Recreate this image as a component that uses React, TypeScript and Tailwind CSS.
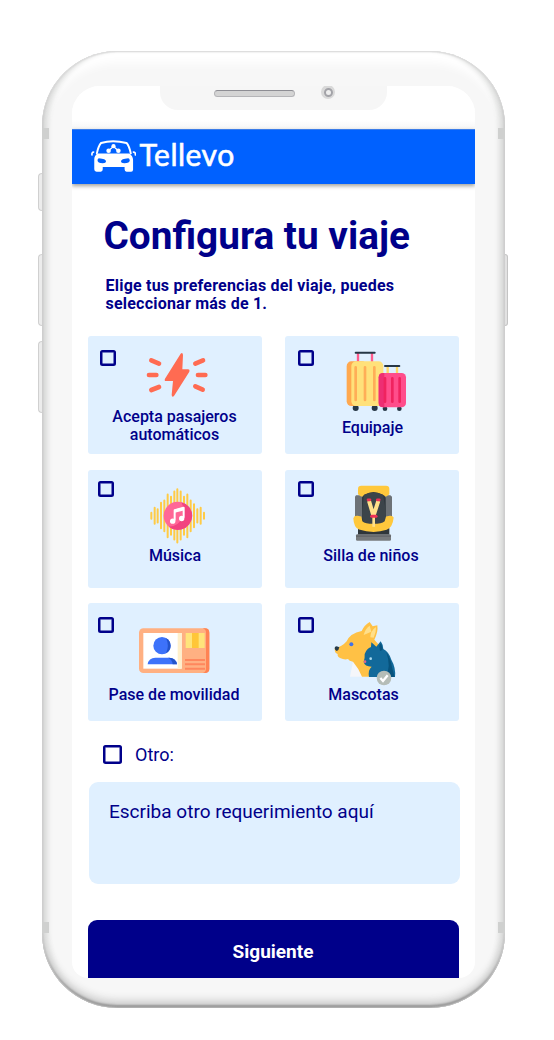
import type { ReactNode } from 'react';

function Box({ className = '' }: { className?: string }) {
  return (
    <input
      type="checkbox"
      className={`block shrink-0 appearance-none rounded-[2.5px] border-2 border-[#00008a] shadow-[inset_0_0_0_0.5px_#00008a] checked:bg-[#00008a] ${className}`}
    />
  );
}

type CardProps = { box: string; label: string; labelClass?: string; children: ReactNode };

function Card({ box, label, labelClass = '', children }: CardProps) {
  return (
    <label className="grid h-[118px] justify-items-center rounded-[3px] bg-[#e0f0ff]">
      <Box className={`col-start-1 row-start-1 h-4 w-4 justify-self-start ${box}`} />
      <div className="col-start-1 row-start-1 flex flex-col items-center">
        {children}
        <span className={`w-[150px] text-center text-[16px] font-medium leading-[18px] ${labelClass}`}>{label}</span>
      </div>
    </label>
  );
}

function Bolt() {
  return (
    <svg className="ml-[2px] h-[72px] w-24" viewBox="139 18 288 216">
      <path d="M297 71 250 146q-3 7 3 7h21l-4 42q1 8 7 3l46-73q2-7-4-7h-17l2-43q-1-9-7-4Z" fill="#ff6b52" />
      <path d="M209 91l23 10M202 135h22M209 180l23-9M364 91l-23 10M349 135h22M341 169l22 10" stroke="#ff6b52" strokeWidth="14" strokeLinecap="round" />
    </svg>
  );
}

function Luggage() {
  return (
    <svg className="ml-[2px] h-[83px] w-24" viewBox="145 18 288 249">
      <path d="M244 68v28M286 68v28" stroke="#ff5c8d" strokeWidth="7" />
      <path d="M237 68h57" stroke="#263746" strokeWidth="6" strokeLinecap="round" />
      <path d="M333 108v24M361 108v24" stroke="#ffd866" strokeWidth="7" />
      <path d="M325 108h43" stroke="#263746" strokeWidth="6" strokeLinecap="round" />
      <circle cx="237" cy="234" r="9" fill="#263746" /><circle cx="294" cy="234" r="9" fill="#263746" />
      <circle cx="325" cy="236" r="7" fill="#263746" /><circle cx="368" cy="236" r="7" fill="#263746" />
      <rect x="210" y="94" width="60" height="134" rx="14" fill="#ffa84f" />
      <rect x="224" y="94" width="96" height="134" rx="14" fill="#ffe17a" />
      <path d="M237 112v98M265 112v98M293 112v98" stroke="#ffae57" strokeWidth="8" strokeLinecap="round" />
      <rect x="306" y="129" width="82" height="103" rx="13" fill="#ff4d8b" />
      <path d="M306 142q0-13 13-13h4v103h-4q-13 0-13-13Z" fill="#ee2e73" />
      <path d="M325 145v70M347 145v70M369 145v70" stroke="#f0235f" strokeWidth="8" strokeLinecap="round" />
    </svg>
  );
}

function Music() {
  return (
    <svg className="h-[77px] w-24" viewBox="139 15.5 288 231">
      <path d="M212 144v18M222 129v48M231 133v40M241 114v76M251 107v92M261 89v128M271 96v114M281 80v144M290 73v160M300 80v144M310 96v114M320 89v128M330 107v92M340 118v69M350 133v40M360 129v48M370 144v18" stroke="#ffcb45" strokeWidth="6" strokeLinecap="round" />
      <circle cx="291" cy="153" r="42" fill="#ff6797" />
      <path d="M302 112a42 42 0 0 1 0 82q-22 5-38-8 31-1 42-31 7-24-4-43Z" fill="#f24380" />
      <path d="M282 167v-31l27-7v30" fill="none" stroke="#fff" strokeWidth="6" strokeLinejoin="round" />
      <path d="M282 134l27-7v10l-27 7Z" fill="#fff" />
      <circle cx="276" cy="169" r="8" fill="#fff" /><circle cx="303" cy="161" r="8" fill="#fff" />
    </svg>
  );
}

function ChildSeat() {
  return (
    <svg className="h-[77px] w-24" viewBox="144 15.5 288 231">
      <path d="M240 91h20v72h-23V96ZM326 91h17l5 5v67h-22Z" fill="#6d7277" />
      <path d="M246 190h94v20h-94Z" fill="#2f363b" />
      <rect x="240" y="208" width="105" height="20" rx="4" fill="#777a7d" />
      <path d="M240 214h105" stroke="#606367" strokeWidth="4" />
      <path d="M246 88V72q0-9 10-9h74q10 0 10 9v16l-9 7h-76Z" fill="#ffc83c" />
      <path d="M258 97q4-6 9-8 25-15 52 0 8 3 10 10l1 74q-6 14-24 17h-26q-18-3-22-15Z" fill="#30383e" />
      <path d="M264 90q29-14 57 0l8 44q4 33-10 48h-50q-14-15-10-48Z" fill="#3c444a" />
      <path d="M232 160q2-8 13-7l11 2 3 14q8 8 33 8t34-8l4-14 11-2q9-1 12 5-3 30-21 37-40 13-83-1-16-7-17-34Z" fill="#ffc83c" />
      <path d="M279 108l13 44M307 108l-14 44" fill="none" stroke="#ffe08a" strokeWidth="12" />
      <path d="M293 152v34" stroke="#ffe08a" strokeWidth="8" />
      <path d="M276 105h6M304 105h6" stroke="#ef3156" strokeWidth="8" strokeLinecap="round" />
      <path d="M287 154h13" stroke="#ef3156" strokeWidth="9" strokeLinecap="round" />
    </svg>
  );
}

function PassCard() {
  return (
    <svg className="ml-[1px] h-[83px] w-24" viewBox="139 15 288 249">
      <rect x="175" y="91" width="211" height="134" rx="13" fill="#ffb082" />
      <path d="M366 91h7q13 0 13 13v108q0 13-13 13h-7q10-3 10-13V104q0-10-10-13Z" fill="#ff8354" />
      <rect x="188" y="105" width="115" height="107" fill="#fff" />
      <path d="M291 105h12v107h-12Z" fill="#fff0cb" />
      <circle cx="244" cy="143" r="26" fill="#3d72fa" />
      <path d="M256 120a26 26 0 0 1 0 46q11-23 0-46Z" fill="#2454ca" />
      <path d="M201 199q3-20 23-20h42q20 0 23 20Z" fill="#3d72fa" />
      <path d="M263 179q22-1 26 20h-13q-1-14-13-20Z" fill="#2454ca" />
      <rect x="315" y="105" width="57" height="45" fill="#ffe47b" />
      <rect x="334" y="105" width="20" height="45" fill="#ffc638" />
      <path d="M313 186h60M313 199h60M313 212h60" stroke="#ff875d" strokeWidth="6" />
    </svg>
  );
}

function Pets() {
  return (
    <svg className="h-[83px] w-24" viewBox="145 15 288 249">
      <path d="M232 191l-9 45h52l-16-43Z" fill="#f5f6fa" />
      <path d="M177 150q22-3 36-20 10-24 45-31 8-18 24-27l9 13 14-3q3 20-9 43 26 24 25 60l-5 51h-57q-9-24-27-45-12-2-15-8-11 3-22-2-11-5-9-13-10-2-9-18Z" fill="#ffc145" />
      <path d="M264 111q4-18 18-28l5 18M284 118q0-19 17-31 1 15-7 32Z" fill="#ffdf8a" />
      <path d="M177 150q0-5 6-5l8 3q-1 9-8 11-6-3-6-9Z" fill="#263b4b" />
      <circle cx="227" cy="139" r="6" fill="#4172e8" />
      <path d="M280 237q-4-21 8-31-21 0-24-14 4-11 3-24 6-17 19-21l1-14 15 13 13-16q8 11 8 23 17 9 24 32 14 24 11 52Z" fill="#12699a" />
      <path d="M311 143l5-7 5 18q-2 5-8 4ZM332 163q14 21 17 45l8 29h-28q19-29 3-74Z" fill="#07527c" />
      <circle cx="285" cy="182" r="4" fill="#abd9ed" /><circle cx="268" cy="191" r="4" fill="#dd668b" />
      <circle cx="325" cy="240" r="22" fill="#b5bdb7" />
      <path d="m314 240 8 9 14-17" fill="none" stroke="#fff" strokeWidth="7" />
    </svg>
  );
}

function CarLogo() {
  return (
    <svg className="mb-[2px] h-8 w-[45px]" viewBox="181 301 138 96">
      <path d="M199 341q5-23 13-32 35-11 78 0 8 9 13 32" fill="none" stroke="#fff" strokeWidth="6" strokeLinecap="round" />
      <path fillRule="evenodd" d="M202 341h97q11 8 11 20v30q0 6-6 6h-14q-6 0-6-7v-7h-67v7q0 7-6 7h-13q-7 0-7-7v-31q0-12 11-18Zm-1 21q0 9 16 9 10 0 10-6 0-7-22-9-4 1-4 6Zm99 0q-1-6-5-6-22 2-22 9 0 6 10 6 17 0 17-9Z" fill="#fff" />
      <path d="M189 337q-6 0-5 9M311 337q7 0 6 9" fill="none" stroke="#fff" strokeWidth="5" strokeLinecap="round" />
      <path d="M234 333l16-13 15 13M250 320v-2" fill="none" stroke="#fff" strokeWidth="4" />
      <circle cx="250" cy="319" r="6.5" fill="#fff" /><circle cx="235" cy="333" r="7" fill="#fff" /><circle cx="265" cy="333" r="7" fill="#fff" />
    </svg>
  );
}

function Notch() {
  return (
    <div className="flex h-[43px] shrink-0 justify-center bg-gradient-to-b from-white from-80% to-[#f6f6f6]">
      <div className="flex h-6 w-[227px] items-start rounded-b-[18px] bg-[#f6f6f6] pl-[54px] pt-[4px]">
        <div className="h-[7px] w-[81px] rounded-full border border-[#b5b5b8] border-t-[#8e8e94] bg-[#d4d4d4]" />
        <div className="-mt-[5px] ml-[26px] flex h-[14px] w-[14px] items-center justify-center rounded-full bg-[#d9d9d9]">
          <div className="h-[9px] w-[9px] rounded-full border-2 border-[#a3a3a8] bg-[#eeeeee]" />
        </div>
      </div>
    </div>
  );
}

export default function App() {
  return (
    <main className="h-[1040px] w-[554px] overflow-hidden bg-white pl-[42px] pt-[51px] font-['Roboto',sans-serif] text-[#00008a]">
      <div className="relative h-[957px] w-[463px] rounded-[75px] bg-[#f7f7f7] px-[30px] pb-[30px] pt-[35px] shadow-[inset_0_1px_1px_#dedede,inset_1px_0_2px_#cfcfcf,inset_-1px_0_2px_#cfcfcf,inset_0_-3px_2px_#969696,inset_0_-7px_9px_#c9c9c9,inset_8px_0_5px_-2px_#e2e3e2,inset_-8px_0_5px_-2px_#e2e3e2,inset_0_12px_10px_#ffffff]">
        <i className="absolute -left-[4px] top-[122px] h-[38px] w-[4px] rounded-l-sm border border-r-0 border-[#d0d0d0] bg-[#ececec]" />
        <i className="absolute -left-[4px] top-[203px] h-[72px] w-[4px] rounded-l-sm border border-r-0 border-[#d0d0d0] bg-[#ececec]" />
        <i className="absolute -left-[4px] top-[290px] h-[72px] w-[4px] rounded-l-sm border border-r-0 border-[#d0d0d0] bg-[#ececec]" />
        <i className="absolute -right-[3px] top-[203px] h-[72px] w-[3px] rounded-r-sm border border-l-0 border-[#c4c4c4] bg-[#e2e2e2]" />
        <i className="absolute left-0 top-[77px] h-[11px] w-[7px] bg-[#cfd0cf]" />
        <i className="absolute right-0 top-[77px] h-[11px] w-[7px] bg-[#cfd0cf]" />
        <i className="absolute left-0 top-[871px] h-[11px] w-[7px] bg-[#cfd0cf]" />
        <i className="absolute right-0 top-[871px] h-[11px] w-[7px] bg-[#cfd0cf]" />

        <div className="flex h-[892px] w-[403px] flex-col overflow-hidden rounded-b-[16px] rounded-t-[28px] bg-white">
          <Notch />
          <header className="flex h-[54.5px] shrink-0 items-center border-t border-[#3b7ce8] bg-[#0061ff] pl-[19px] text-white shadow-[0_2px_4px_#a0a09a]">
            <CarLogo />
            <span className="ml-[3.5px] pb-[5px] font-['Lato',sans-serif] text-[30px] leading-8 tracking-[0.5px] [-webkit-text-stroke:0.6px_white]">Tellevo</span>
          </header>

          <h1 className="ml-[31.5px] mt-[28.5px] whitespace-nowrap text-[38.75px] font-bold leading-[48px]">Configura tu viaje</h1>
          <p className="ml-[33.5px] mt-[17px] w-[310px] text-[16px] font-bold leading-[18px] tracking-[0.22px]">
            Elige tus preferencias del viaje, puedes seleccionar más de 1.
          </p>

          <div className="ml-[15.5px] mt-[23px] grid w-[371px] grid-cols-2 gap-x-[23px] gap-y-[15.5px]">
            <Card box="ml-[12.5px] mt-[13.5px]" label="Acepta pasajeros automáticos"><Bolt /></Card>
            <Card box="ml-[13.5px] mt-[13.5px]" label="Equipaje" labelClass="pl-[2px]"><Luggage /></Card>
            <Card box="ml-[10px] mt-[11.5px]" label="Música" labelClass="pl-[1px]"><Music /></Card>
            <Card box="ml-[13.5px] mt-[11.5px]" label="Silla de niños" labelClass="pr-[1px]"><ChildSeat /></Card>
            <Card box="ml-[10px] mt-[14px]" label="Pase de movilidad" labelClass="pr-[1px]"><PassCard /></Card>
            <Card box="ml-[13.5px] mt-[14px]" label="Mascotas" labelClass="pr-[16px]"><Pets /></Card>
          </div>

          <label className="ml-[31px] mt-[21px] flex h-6 items-center gap-[13px] text-[18px]">
            <Box className="h-[19px] w-[19px]" />
            Otro:
          </label>
          <textarea
            className="ml-[16.5px] mt-[16px] block h-[102px] w-[371px] shrink-0 resize-none rounded-[9px] bg-[#e0f0ff] px-[20.5px] py-[19px] text-[19px] leading-[22px] placeholder:text-[#00008a] placeholder:opacity-100"
            placeholder="Escriba otro requerimiento aquí"
          />
          <button className="ml-[15.5px] mt-[36px] h-[58px] w-[371px] shrink-0 rounded-t-[9px] bg-[#00008a] pt-[7px] text-[19px] font-bold text-white">
            Siguiente
          </button>
        </div>
      </div>
    </main>
  );
}
